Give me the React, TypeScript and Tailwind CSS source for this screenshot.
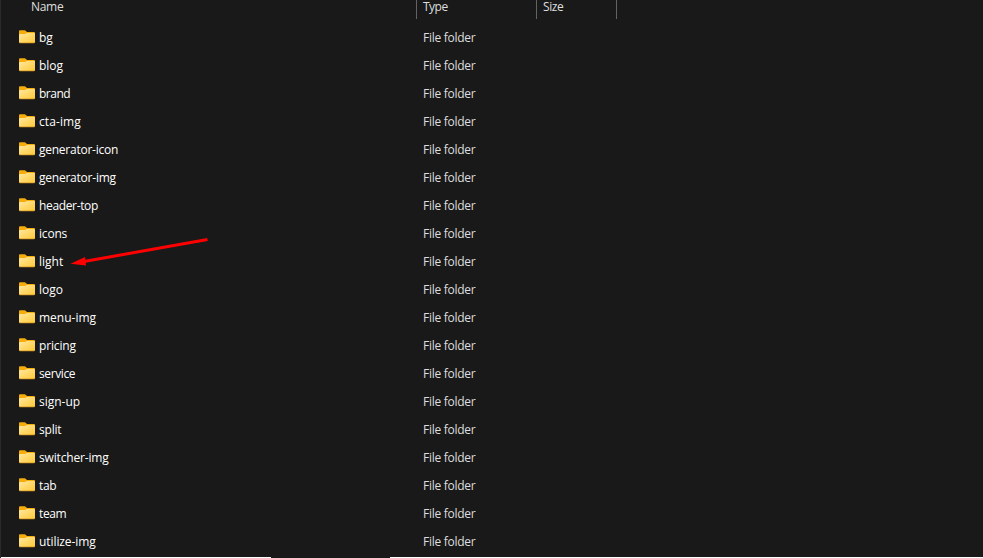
const folders: { name: string; tracking?: string }[] = [
  { name: 'bg' },
  { name: 'blog' },
  { name: 'brand', tracking: 'tracking-[-0.5px]' },
  { name: 'cta-img', tracking: 'tracking-[0.1px]' },
  { name: 'generator-icon', tracking: 'tracking-[-0.25px]' },
  { name: 'generator-img', tracking: 'tracking-[-0.23px]' },
  { name: 'header-top', tracking: 'tracking-[-0.35px]' },
  { name: 'icons', tracking: 'tracking-[-0.2px]' },
  { name: 'light' },
  { name: 'logo' },
  { name: 'menu-img' },
  { name: 'pricing', tracking: 'tracking-[-0.15px]' },
  { name: 'service', tracking: 'tracking-[-0.4px]' },
  { name: 'sign-up' },
  { name: 'split', tracking: 'tracking-[-0.2px]' },
  { name: 'switcher-img', tracking: 'tracking-[-0.17px]' },
  { name: 'tab', tracking: 'tracking-[-0.3px]' },
  { name: 'team', tracking: 'tracking-[-0.4px]' },
  { name: 'utilize-img', tracking: 'tracking-[-0.08px]' },
];

function FolderIcon() {
  return (
    <svg width="16" height="14" viewBox="0 0 16 14" className="mb-[3px] shrink-0">
      <defs>
        <linearGradient id="front" x1="0" y1="0" x2="1" y2="1">
          <stop offset="0" stopColor="#ffe8a0" />
          <stop offset="1" stopColor="#ffc937" />
        </linearGradient>
      </defs>
      <path d="M0 1.3Q0 .3 1 .3H5.7Q6.2 .3 6.6 .7L8 2H15Q16 2 16 3V8H0Z" fill="#f5ad0c" />
      <path d="M0 5Q0 4 1 4H5.8Q6.3 4 6.7 3.7L7.2 3.3Q7.6 3 8 3H15Q16 3 16 4V12Q16 13 15 13H1Q0 13 0 12Z" fill="url(#front)" />
      <path d="M0 11.7Q.2 12.4 1 12.4H15Q15.8 12.4 16 11.7V12Q16 13.2 15 13.2H1Q0 13.2 0 12Z" fill="#dc9c20" />
    </svg>
  );
}

export default function App() {
  return (
    <main className="relative flex h-[558px] w-[983px] flex-col overflow-hidden border-l border-[#2b2b2b] bg-[#191919] font-['Open_Sans','Noto_Sans',sans-serif] text-[12px] leading-[16px] text-white">
      <header className="flex h-[19px] shrink-0 leading-[14px] text-[#dedede]">
        <div className="w-[416px] border-r border-[#636363] pl-[30px] tracking-[-0.3px]">Name</div>
        <div className="w-[120px] border-r border-[#636363] pl-[6px] tracking-[-0.5px]">Type</div>
        <div className="w-[80px] border-r border-[#636363] pl-[6px] tracking-[-0.4px]">Size</div>
      </header>
      <ul className="mt-[5px] shrink-0">
        {folders.map(({ name, tracking }) => (
          <li key={name} className="flex h-7 items-center pl-[18px]">
            <div className="flex w-[404px] items-center gap-1">
              <FolderIcon />
              <span className={tracking}>{name}</span>
            </div>
            <span className="tracking-[-0.28px] text-[#dedede]">File folder</span>
          </li>
        ))}
      </ul>
      <svg className="absolute top-[230px] left-[64px]" width="150" height="40" viewBox="65 230 150 40">
        <path d="M84 261.5L207.5 239.5" stroke="#ff0000" strokeWidth="3" />
        <path d="M70.5 263.7L85 257L86 265.5Z" fill="#ff0000" />
      </svg>
      <div className="absolute bottom-0 -left-px flex h-px w-[983px] justify-between">
        <span className="w-[271px] bg-white" />
        <span className="w-[593px] bg-white" />
      </div>
    </main>
  );
}
